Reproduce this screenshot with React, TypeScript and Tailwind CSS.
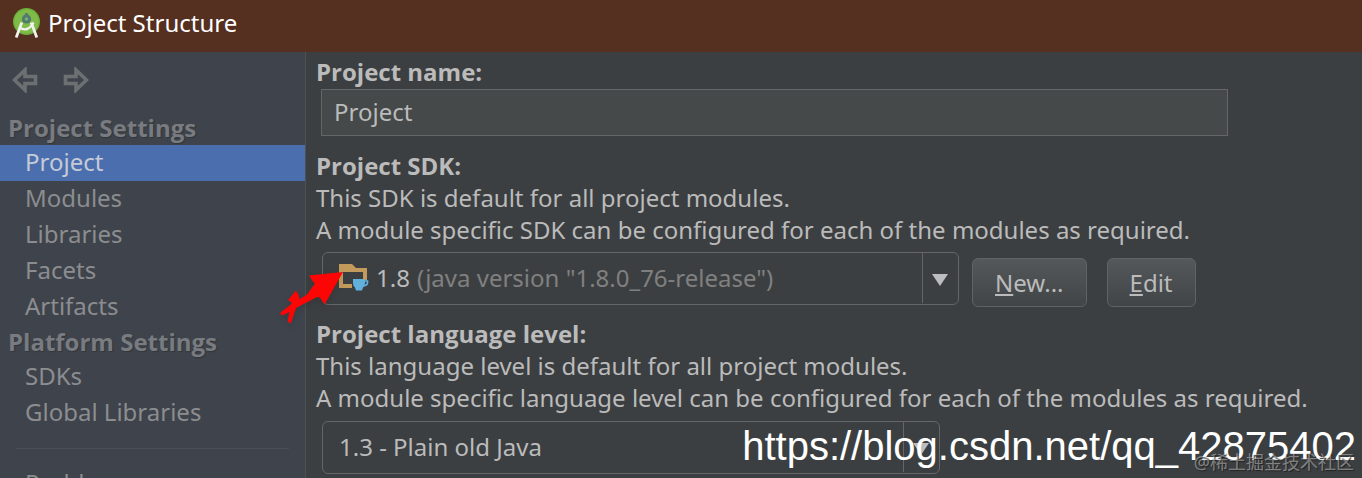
import { useState } from 'react'
import type { ReactNode } from 'react'

const projectItems = ['Project', 'Modules', 'Libraries', 'Facets', 'Artifacts']
const platformItems = ['SDKs', 'Global Libraries']

function StudioLogo() {
  return (
    <svg viewBox="0 0 28 32" className="h-8 w-7 shrink-0" aria-hidden="true">
      <circle cx="14.500" cy="14.500" r="13.500" fill="#6fae3c" />
      <circle cx="14.500" cy="14.500" r="12" fill="#7fbb48" />
      <circle cx="14.500" cy="12" r="4.600" fill="#4e7a72" />
      <rect x="12.900" y="6" width="3.200" height="4" rx="1" fill="#587a6b" />
      <circle cx="14.500" cy="12" r="1.800" fill="#7dab70" />
      <path d="M9.800 15.500 4.200 30.600M19.200 15.500l5.600 15.100" stroke="#f1f1ee" strokeWidth="2.800" fill="none" />
      <path d="M7.500 20.500q8 5.500 14-5" stroke="#f1f1ee" strokeWidth="2.400" fill="none" />
    </svg>
  )
}

function ArrowIcon({ flip }: { flip?: boolean }) {
  return (
    <svg viewBox="0 0 26 26" className={flip ? 'h-[26px] w-[26px] -scale-x-100' : 'h-[26px] w-[26px]'} aria-hidden="true">
      <path d="M2.500 13 13 3V9.500H23.500V16.500H13V23Z" fill="none" stroke="#6d7073" strokeWidth="3.600" />
    </svg>
  )
}

function SdkIcon() {
  return (
    <svg viewBox="0 0 30 27" className="h-[27px] w-[30px]" aria-hidden="true">
      <path d="M0 0h13l4 4h11v12h-4V8H4v12h9v4H0Z" fill="#c29a5b" />
      <path d="M14 15h12v4q0 3-2 4.500l-1 3h-6l-1-3q-2-1.500-2-4.500Z" fill="#62b1dd" />
      <path d="M25 17h3.500v1.500q0 3-4.500 3.500" fill="none" stroke="#62b1dd" strokeWidth="1.700" />
    </svg>
  )
}

function RedArrow() {
  return (
    <svg viewBox="0 0 66 56" className="pointer-events-none absolute top-[269px] left-[279px] h-14 w-[66px] drop-shadow-md" aria-hidden="true">
      <path
        d="M64 3 30 6.500 33.500 12 36 14.500 28 25.500 20 30.500V27L17 21.500 9 31l3.500 2.500V35L1 44l2 2.500 7.500-3.500-2 10 3.500 1 5-15L38 28l3 .500 4.500 7Z"
        fill="#fe0505"
      />
    </svg>
  )
}

function NavItem({ label, active, onSelect }: { label: string; active: boolean; onSelect: () => void }) {
  return (
    <li>
      <button
        type="button"
        onClick={onSelect}
        className={
          active
            ? 'block h-9 w-full bg-[#4b6eaf] pb-0.5 pl-[25px] text-left text-[#c5cbd6]'
            : 'block h-9 w-full pb-0.5 pl-[25px] text-left text-[#8b8d90]'
        }
      >
        {label}
      </button>
    </li>
  )
}

function NavHeading({ children }: { children: ReactNode }) {
  return (
    <h2 className="pl-2 font-['Open_Sans',sans-serif] leading-[34px] font-bold text-[#787b7f] [text-shadow:1px_1px_1px_#33363b]">
      {children}
    </h2>
  )
}

function FieldLabel({ htmlFor, children }: { htmlFor: string; children: ReactNode }) {
  return (
    <label htmlFor={htmlFor} className="block font-['Open_Sans',sans-serif] font-bold">
      {children}
    </label>
  )
}

function DropDownArrow() {
  return (
    <span className="pointer-events-none col-start-1 row-start-1 flex h-[51px] w-[37px] items-center justify-center self-start justify-self-end border-l border-[#646667] pt-1 pr-0.5">
      <svg viewBox="0 0 16 12" className="h-3 w-4" aria-hidden="true">
        <path d="M0 0h16L8 12Z" fill="#bcbdbf" />
      </svg>
    </span>
  )
}

function DialogButton({ children }: { children: ReactNode }) {
  return (
    <button
      type="button"
      className="h-[49px] rounded-md border border-[#5f6364] bg-linear-to-b from-[#54585a] to-[#414547] px-[22px]"
    >
      {children}
    </button>
  )
}

export default function App() {
  const [selected, setSelected] = useState('Project')
  const [name, setName] = useState('Project')

  return (
    <div className="relative flex h-screen flex-col overflow-hidden bg-[#3c3f41] font-['Noto_Sans','Noto_Sans_CJK_SC',sans-serif] text-2xl leading-8 text-[#bbbbbb]">
      <header className="flex h-[52px] shrink-0 items-center gap-2 bg-[#552f1f] pb-1.5 pl-3 text-white">
        <StudioLogo />
        <h1>Project Structure</h1>
      </header>

      <div className="flex min-h-0 flex-1">
        <nav className="w-[306px] shrink-0 overflow-hidden border-r border-[#4d5156] bg-[#3f434b]">
          <div className="flex h-[59px] items-start gap-[25px] pt-[15px] pl-3">
            <button type="button" aria-label="Back">
              <ArrowIcon />
            </button>
            <button type="button" aria-label="Forward">
              <ArrowIcon flip />
            </button>
          </div>
          <NavHeading>Project Settings</NavHeading>
          <ul>
            {projectItems.map((item) => (
              <NavItem key={item} label={item} active={item === selected} onSelect={() => setSelected(item)} />
            ))}
          </ul>
          <NavHeading>Platform Settings</NavHeading>
          <ul>
            {platformItems.map((item) => (
              <NavItem key={item} label={item} active={item === selected} onSelect={() => setSelected(item)} />
            ))}
          </ul>
          <hr className="mx-4 my-[17px] border-[#4b4e57]" />
          <ul>
            <NavItem label="Problems" active={selected === 'Problems'} onSelect={() => setSelected('Problems')} />
          </ul>
        </nav>

        <main className="min-w-0 flex-1 overflow-hidden pt-1 pl-2.5">
          <FieldLabel htmlFor="project-name">Project name:</FieldLabel>
          <div className="mt-px mr-[134px] ml-[5px]">
            <input
              id="project-name"
              value={name}
              onChange={(e) => setName(e.target.value)}
              className="block h-[47px] w-full border border-[#646667] bg-[#45494a] px-3 pb-0.5"
            />
          </div>

          <div className="mt-3.5">
            <FieldLabel htmlFor="project-sdk">Project SDK:</FieldLabel>
            <p>This SDK is default for all project modules.</p>
            <p>A module specific SDK can be configured for each of the modules as required.</p>
          </div>
          <div className="mt-1.5 ml-1.5 flex">
            <div className="grid w-[637px] self-start">
              <select
                id="project-sdk"
                className="col-start-1 row-start-1 h-[53px] w-full appearance-none rounded-md border border-[#646667] bg-[#3c3f41] pb-0.5 pl-[53px]"
              >
                <option>1.8</option>
              </select>
              <span className="pointer-events-none col-start-1 row-start-1 flex items-center self-center pb-0.5 pl-[17px]">
                <SdkIcon />
                <span className="pl-12 text-[#808080]">(java version "1.8.0_76-release")</span>
              </span>
              <DropDownArrow />
            </div>
            <div className="flex gap-5 pt-1.5 pl-[13px]">
              <DialogButton>
                <span className="underline">N</span>ew...
              </DialogButton>
              <DialogButton>
                <span className="underline">E</span>dit
              </DialogButton>
            </div>
          </div>

          <div className="mt-[11px]">
            <FieldLabel htmlFor="language-level">Project language level:</FieldLabel>
            <p>This language level is default for all project modules.</p>
            <p>A module specific language level can be configured for each of the modules as required.</p>
          </div>
          <div className="mt-[7px] ml-1.5 grid w-[618px]">
            <select
              id="language-level"
              className="col-start-1 row-start-1 h-[53px] w-full appearance-none rounded-md border border-[#646667] bg-[#3c3f41] pb-0.5 pl-4"
            >
              <option>1.3 - Plain old Java</option>
            </select>
            <DropDownArrow />
          </div>
        </main>
      </div>

      <RedArrow />
      <p className="pointer-events-none absolute right-1.5 bottom-2 font-['Liberation_Sans',sans-serif] text-[40px] leading-[48px] text-white">
        https://blog.csdn.net/qq_42875402
      </p>
      <p className="pointer-events-none absolute right-2 bottom-1 text-lg leading-6 text-white/40 [text-shadow:1px_1px_1px_#222222]">
        @稀土掘金技术社区
      </p>
    </div>
  )
}
